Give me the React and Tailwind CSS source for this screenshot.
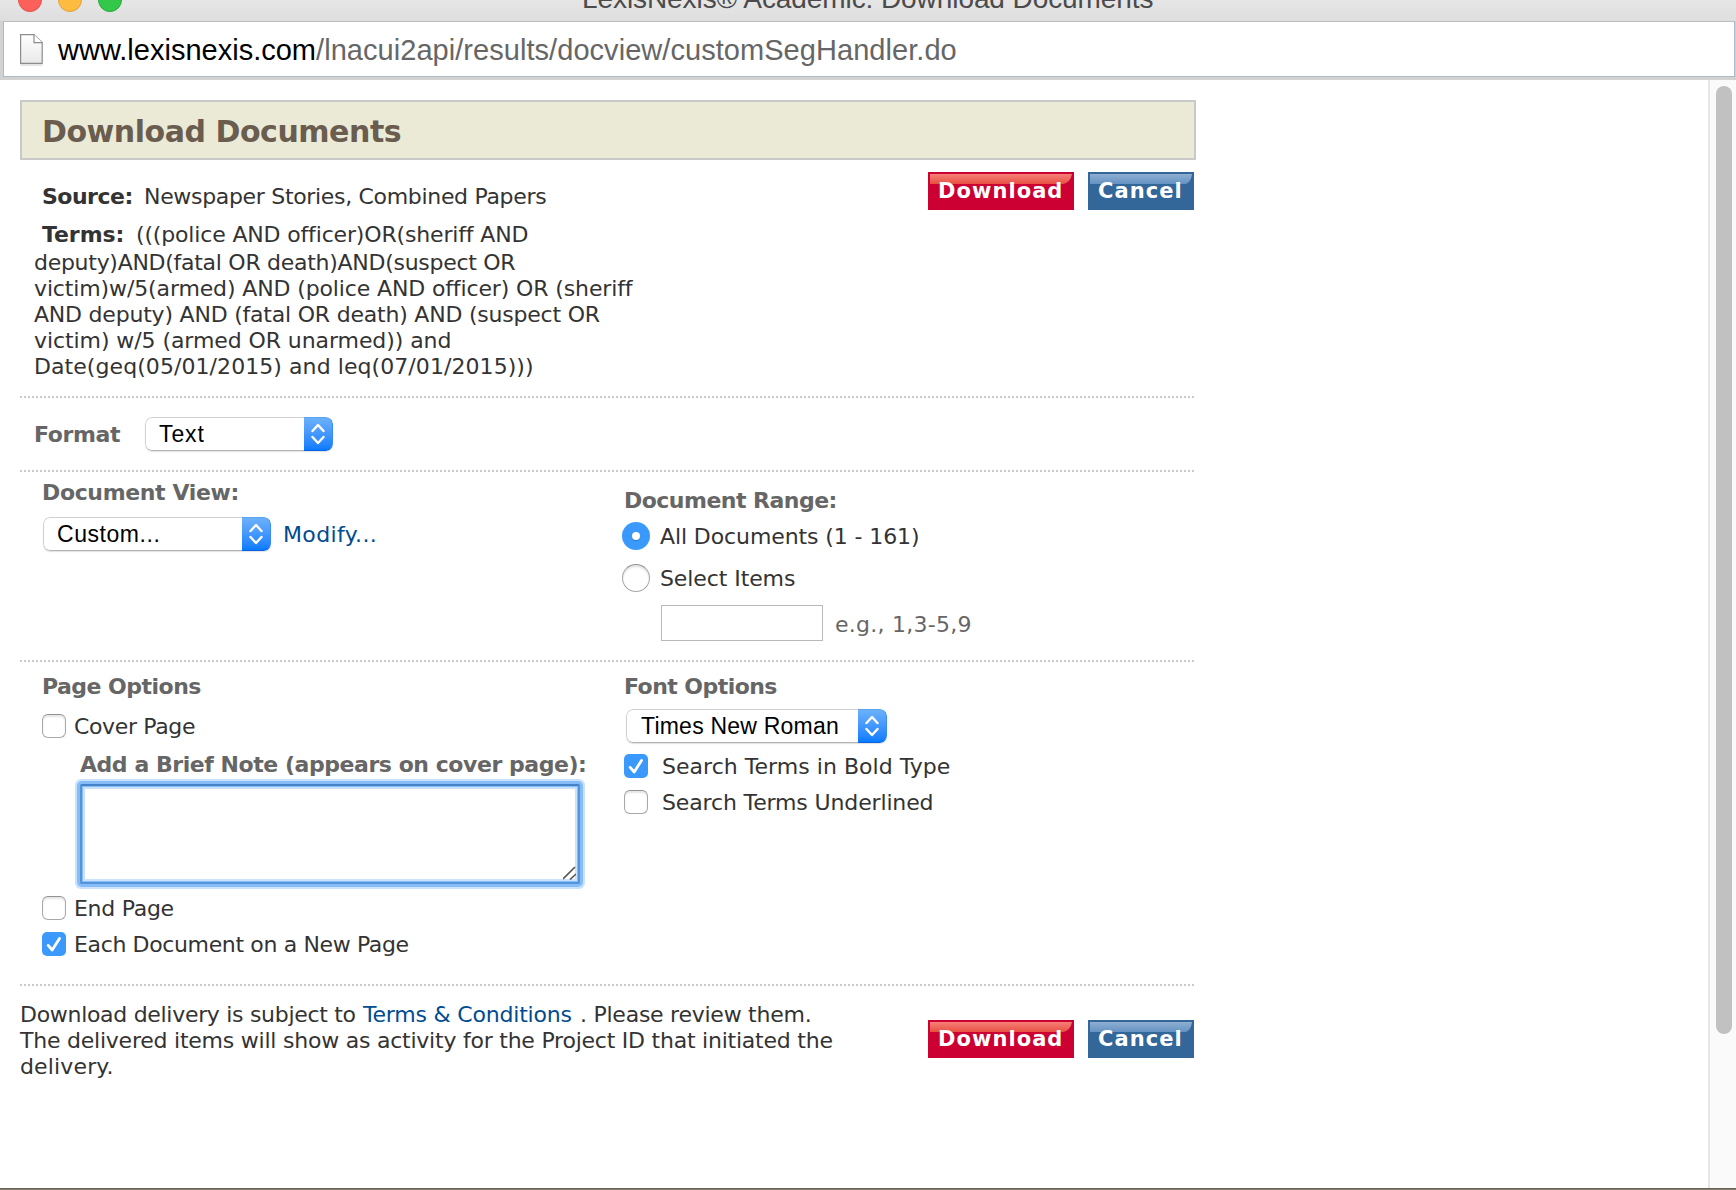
import React from "react";

const divider =
  "h-[2px] w-[1174px] shrink-0 bg-[repeating-linear-gradient(to_right,#c9c9c9_0px,#c9c9c9_2px,transparent_2px,transparent_4px)]";

function Divider() {
  return <div className={divider} />;
}

function GlossButton({ tone, className, children }) {
  const red = tone === "red";
  return (
    <button
      className={`relative h-[38px] shrink-0 overflow-hidden text-left ${red ? "bg-[#cc0033]" : "bg-[#336699]"} ${className}`}
    >
      <svg
        className="absolute left-[2px] top-[2px] h-[10px] w-[calc(100%-4px)]"
        viewBox="0 0 100 10"
        preserveAspectRatio="none"
      >
        <defs>
          <linearGradient id={red ? "gloss-red" : "gloss-blue"} x1="0" y1="0" x2="0" y2="1">
            <stop offset="0" stopColor={red ? "#f58078" : "#8fafd2"} />
            <stop offset="1" stopColor={red ? "#e94f42" : "#6492c3"} />
          </linearGradient>
        </defs>
        <path d="M0 0H100Q99 8 94 10H0Z" fill={red ? "url(#gloss-red)" : "url(#gloss-blue)"} />
      </svg>
      <span className="relative block pl-[10px] pt-px pb-px text-[21px] font-bold leading-[34px] tracking-[1.05px] text-white">
        {children}
      </span>
    </button>
  );
}

function Buttons({ className }) {
  return (
    <div className={`flex gap-[14px] ${className}`}>
      <GlossButton tone="red" className="w-[146px]">Download</GlossButton>
      <GlossButton tone="blue" className="w-[106px]">Cancel</GlossButton>
    </div>
  );
}

function Select({ className, children }) {
  return (
    <div
      className={`flex h-[34px] shrink-0 overflow-hidden rounded-[7px] bg-white shadow-[0_1px_1px_rgba(0,0,0,0.12)] ${className}`}
    >
      <div className="flex-1 rounded-l-[7px] border border-r-0 border-[#d0d0d0] border-b-[#b4b4b4] pl-[13px] font-['Liberation_Sans',sans-serif] text-[23px] leading-[32px] text-black">
        {children}
      </div>
      <div className="flex w-[29px] items-center justify-center rounded-r-[7px] border border-l-0 border-t-[#5ba2f0] border-r-[#3b8cf2] border-b-[#0a63e6] bg-linear-to-b from-[#6bb1fb] to-[#067bff]">
        <svg width="14" height="22" viewBox="0 0 14 22" fill="none" stroke="#fff" strokeWidth="2.4" strokeLinecap="round" strokeLinejoin="round">
          <path d="M1.5 8L7 2L12.5 8M1.5 14L7 20L12.5 14" />
        </svg>
      </div>
    </div>
  );
}

function Check({ checked }) {
  return checked ? (
    <span className="flex size-6 shrink-0 items-center justify-center rounded-[5px] bg-[#3b99fc]">
      <svg width="24" height="24" viewBox="0 0 24 24" fill="none" stroke="#fff" strokeWidth="2.8" strokeLinecap="round" strokeLinejoin="round">
        <path d="M6.2 13.4L10.2 18L17.5 6.5" />
      </svg>
    </span>
  ) : (
    <span className="size-6 shrink-0 rounded-[6px] border border-[#a8a8a8] border-t-[#929292] bg-white shadow-[inset_0_2px_2px_#e6e6e6]" />
  );
}

function Radio({ checked }) {
  return checked ? (
    <span className="flex size-7 shrink-0 items-center justify-center rounded-full bg-[#3b99fc]">
      <span className="size-2 rounded-full bg-white shadow-[0_1px_1px_rgba(0,0,0,0.2)]" />
    </span>
  ) : (
    <span className="size-7 shrink-0 rounded-full border border-[#a8a8a8] border-t-[#929292] bg-white shadow-[inset_0_2px_2px_#e2e2e2]" />
  );
}

function Chrome() {
  return (
    <header className="h-[80px] shrink-0 overflow-hidden bg-[#d2d2d2]">
      <div className="flex h-[21px] bg-linear-to-b from-[#e6e6e6] to-[#dedede]">
        <div className="-mt-[12px] flex w-[582px] shrink-0 gap-4 pl-[18px]">
          <span className="size-6 rounded-full border border-[#e8514b] bg-[#fc605b]" />
          <span className="size-6 rounded-full border border-[#e5a03a] bg-[#fdbc40]" />
          <span className="size-6 rounded-full border border-[#23ab36] bg-[#34c84a]" />
        </div>
        <div className="-mt-[16px] whitespace-nowrap font-['Liberation_Sans',sans-serif] text-[28px] leading-[30px] tracking-[-0.08px] text-[#4b4b4b]">
          LexisNexis® Academic: Download Documents
        </div>
      </div>
      <div className="ml-[3px] mr-px flex h-[56px] border border-[#adb9c8] border-t-[#bdbdbd] bg-white pl-4">
        <svg className="mt-[12px] shrink-0" width="23" height="33" viewBox="0 0 23 33">
          <defs>
            <linearGradient id="sheet" x1="0" y1="0" x2="0" y2="1">
              <stop offset="0" stopColor="#fff" />
              <stop offset="1" stopColor="#e9e9ea" />
            </linearGradient>
          </defs>
          <rect x="0.5" y="30" width="22" height="2" fill="#e4e4e4" />
          <path d="M0.6 0.6H14L22.2 8.6V29.4H0.6Z" fill="url(#sheet)" stroke="#8d8d8d" strokeWidth="1.2" />
          <path d="M14 0.6V8.6H22.2" fill="#fff" stroke="#8d8d8d" strokeWidth="1.2" />
        </svg>
        <div className="ml-[15px] whitespace-nowrap font-['Liberation_Sans',sans-serif] text-[29px] leading-[56px] text-[#666666]">
          <span className="text-black tracking-[0.01px]">www.lexisnexis.com</span>
          <span className="tracking-[0.05px]">/lnacui2api/results/docview/customSegHandler.do</span>
        </div>
      </div>
    </header>
  );
}

const heading = "font-bold text-[#666666]";

export default function App() {
  return (
    <div className="flex h-[1190px] w-[1736px] flex-col overflow-hidden bg-white font-['DejaVu_Sans',Verdana,sans-serif] text-[22px] leading-[26px] text-[#333333]">
      <Chrome />
      <div className="flex h-[1108px] shrink-0">
        <main className="flex w-[1708px] shrink-0 flex-col whitespace-nowrap pl-[20px] pt-[20px]">
          <h1 className="h-[60px] w-[1176px] shrink-0 border-2 border-[#c9c9c9] bg-[#ebead6] pl-[20px] text-[30px] font-bold leading-[59px] tracking-[-0.46px] text-[#6a5c4e]">
            Download Documents
          </h1>

          <section className="flex h-[236px] shrink-0">
            <div className="w-[908px] shrink-0 pl-[14px] pt-[24px]">
              <div className="flex pl-[8px]">
                <b className="w-[102px] tracking-[-0.5px]">Source:</b>
                <span className="tracking-[-0.32px]">Newspaper Stories, Combined Papers</span>
              </div>
              <div className="mt-[12px] flex pl-[8px]">
                <b className="w-[94px] tracking-[-0.07px]">Terms:</b>
                <span className="tracking-[-0.16px]">(((police AND officer)OR(sheriff AND</span>
              </div>
              <div className="mt-[2px] tracking-[-0.28px]">deputy)AND(fatal OR death)AND(suspect OR</div>
              <div className="tracking-[-0.13px]">victim)w/5(armed) AND (police AND officer) OR (sheriff</div>
              <div className="tracking-[-0.21px]">AND deputy) AND (fatal OR death) AND (suspect OR</div>
              <div className="tracking-[-0.08px]">victim) w/5 (armed OR unarmed)) and</div>
              <div className="tracking-[0.07px]">Date(geq(05/01/2015) and leq(07/01/2015)))</div>
            </div>
            <Buttons className="pt-[12px]" />
          </section>

          <Divider />
          <section className="flex h-[72px] shrink-0 pl-[13px] pt-[19px]">
            <div className={`${heading} w-[112px] pl-px pt-[5px] tracking-[-0.37px]`}>Format</div>
            <Select className="w-[188px]"><span className="tracking-[0.9px]">Text</span></Select>
          </section>

          <Divider />
          <section className="flex h-[188px] shrink-0">
            <div className="w-[602px] shrink-0 pl-[21px] pt-[8px]">
              <div className={`${heading} pl-px tracking-[-0.36px]`}>Document View:</div>
              <div className="mt-[11px] flex pl-[2px]">
                <Select className="w-[228px]"><span className="tracking-[0.55px]">Custom...</span></Select>
                <a className="pl-[12px] pt-[5px] tracking-[0.38px] text-[#004b91]">Modify...</a>
              </div>
            </div>
            <div className="pt-[16px]">
              <div className={`${heading} pl-[2px] tracking-[-0.52px]`}>Document Range:</div>
              <div className="mt-[8px] flex h-[28px] items-center gap-[10px]">
                <Radio checked />
                <span className="pt-[2px] tracking-[-0.1px]">All Documents (1 - 161)</span>
              </div>
              <div className="mt-[14px] flex h-[28px] items-center gap-[10px]">
                <Radio />
                <span className="pt-[2px] tracking-[-0.09px]">Select Items</span>
              </div>
              <div className="mt-[13px] flex pl-[39px]">
                <input className="h-[36px] w-[162px] border border-[#b9b9b9] bg-white" />
                <span className="pl-[12px] pt-[7px] tracking-[0.26px] text-[#666666]">e.g., 1,3-5,9</span>
              </div>
            </div>
          </section>

          <Divider />
          <section className="flex h-[322px] shrink-0">
            <div className="w-[602px] shrink-0 pl-[21px] pt-[12px]">
              <div className={`${heading} pl-px tracking-[-0.52px]`}>Page Options</div>
              <div className="mt-[14px] flex h-[24px] items-center gap-[8px] pl-px">
                <Check />
                <span className="pt-[2px] tracking-[-0.35px]">Cover Page</span>
              </div>
              <div className={`${heading} mt-[14px] pl-[39px] tracking-[-0.45px]`}>
                Add a Brief Note (appears on cover page):
              </div>
              <div className="relative ml-[39px] mt-[6px] h-[100px] w-[500px]">
                <textarea className="block h-[100px] w-[500px] resize-none rounded-[2px] border-2 border-[#5694d9] border-t-[#4583c9] bg-white shadow-[0_0_0_3px_#86bdf8,0_0_0_5px_#cbe2fd,inset_0_0_0_1px_#86bdf8,inset_0_0_0_3px_#cbe2fd] outline-none" />
                <svg className="absolute bottom-[4px] right-[4px]" width="13" height="14" viewBox="0 0 13 14" stroke="#555" strokeWidth="1.6" fill="none">
                  <path d="M0 13L12 1M7 13.5L13 8" />
                </svg>
              </div>
              <div className="mt-[12px] flex h-[24px] items-center gap-[8px] pl-px">
                <Check />
                <span className="pt-[2px] tracking-[-0.28px]">End Page</span>
              </div>
              <div className="mt-[12px] flex h-[24px] items-center gap-[8px] pl-px">
                <Check checked />
                <span className="pt-[2px] tracking-[-0.36px]">Each Document on a New Page</span>
              </div>
            </div>
            <div className="pt-[12px]">
              <div className={`${heading} pl-[2px] tracking-[-0.55px]`}>Font Options</div>
              <div className="flex pl-[4px] pt-[9px]">
                <Select className="w-[261px]"><span className="pl-px tracking-[0.22px]">Times New Roman</span></Select>
              </div>
              <div className="mt-[11px] flex h-[24px] items-center gap-[14px] pl-[2px]">
                <Check checked />
                <span className="pt-[2px] tracking-[0.03px]">Search Terms in Bold Type</span>
              </div>
              <div className="mt-[12px] flex h-[24px] items-center gap-[14px] pl-[2px]">
                <Check />
                <span className="pt-[2px] tracking-[-0.14px]">Search Terms Underlined</span>
              </div>
            </div>
          </section>

          <Divider />
          <section className="flex shrink-0">
            <div className="w-[908px] shrink-0 pt-[16px]">
              <div className="flex">
                <span className="w-[343px] tracking-[-0.3px]">Download delivery is subject to</span>
                <a className="w-[217px] tracking-[-0.2px] text-[#004b91]">Terms &amp; Conditions</a>
                <span className="tracking-[-0.25px]">. Please review them.</span>
              </div>
              <div className="tracking-[-0.23px]">The delivered items will show as activity for the Project ID that initiated the</div>
              <div className="tracking-[0.15px]">delivery.</div>
            </div>
            <Buttons className="pt-[34px]" />
          </section>
        </main>
        <aside className="w-[28px] border-l-2 border-[#e6e6e6] bg-[#fafafa] pl-[6px] pt-[6px]">
          <div className="h-[948px] w-4 rounded-full bg-[#c1c1c1]" />
        </aside>
      </div>
      <div className="h-[2px] shrink-0 bg-linear-to-b from-[#5f5a4e] to-[#8d8778]" />
    </div>
  );
}
